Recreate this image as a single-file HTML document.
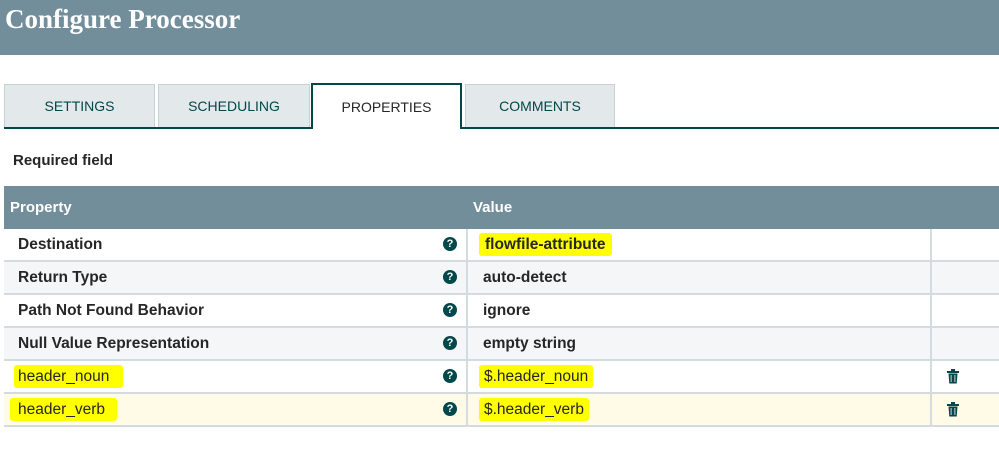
<!DOCTYPE html>
<html><head><meta charset="utf-8"><style>
*{margin:0;padding:0;box-sizing:border-box}
body{width:999px;height:455px;background:#fff;position:relative;overflow:hidden;font-family:"Liberation Sans",sans-serif;}
.hdr{position:absolute;left:0;top:0;width:999px;height:55px;background:#728e9b;}
.hdr h1{position:absolute;left:5px;top:4px;font-family:"Liberation Serif",serif;font-weight:bold;font-size:27px;color:#fff;}
.tab{position:absolute;top:84px;height:44px;background:#e3e8eb;border:1px solid #c7d2d7;border-bottom:none;font-size:14px;color:#004849;text-align:center;line-height:43px;}
.tab.act{background:#fff;border:2px solid #004849;border-bottom:none;color:#262626;top:83px;height:46px;line-height:45px;}
.line{position:absolute;left:4px;top:127px;width:995px;height:2px;background:#004849;}
.req{position:absolute;left:13px;top:152px;font-size:15px;font-weight:bold;color:#262626;}
.th{position:absolute;left:4px;top:186px;width:995px;height:43px;background:#728e9b;color:#fff;font-weight:bold;font-size:15px;}
.th span{position:absolute;top:13px;}
.row{position:absolute;left:4px;width:995px;height:33px;border-bottom:2px solid #d3dbdf;font-size:15.5px;color:#262626;}
.row .n{position:absolute;left:14px;top:7px;font-weight:bold;}
.row .v{position:absolute;left:479px;top:7px;font-weight:bold;}
.row .n.nb,.row .v.nb{font-weight:normal;}
.c1{position:absolute;left:462px;top:0;width:2px;height:33px;background:#d3dbdf;}
.c2{position:absolute;left:926px;top:0;width:2px;height:33px;background:#d3dbdf;}
.q{position:absolute;left:439px;top:8px;width:14px;height:14px;border-radius:50%;background:#004849;color:#fff;font-size:11px;font-weight:bold;text-align:center;line-height:14px;}
.hl{background:#ffff00;padding:2px 4px;margin-left:-4px;border-radius:3px;}
.tr{position:absolute;left:943px;top:8px;}
</style></head><body>
<div class="hdr"><h1>Configure Processor</h1></div>
<div class="tab" style="left:4px;width:151px">SETTINGS</div>
<div class="tab" style="left:158px;width:152px">SCHEDULING</div>
<div class="tab" style="left:465px;width:150px">COMMENTS</div>
<div class="line"></div>
<div class="tab act" style="left:311px;width:151px">PROPERTIES</div>
<div class="req">Required field</div>
<div class="th"><span style="left:6px">Property</span><span style="left:469px">Value</span></div>

<div class="row" style="top:229px;background:#fff"><span class="n">Destination</span><div class="q">?</div><div class="c1"></div><span class="v"><span class="hl" style="padding:3px 6px">flowfile-attribute</span></span><div class="c2"></div></div>
<div class="row" style="top:262px;background:#f4f6f7"><span class="n">Return Type</span><div class="q">?</div><div class="c1"></div><span class="v">auto-detect</span><div class="c2"></div></div>
<div class="row" style="top:295px;background:#fff"><span class="n">Path Not Found Behavior</span><div class="q">?</div><div class="c1"></div><span class="v">ignore</span><div class="c2"></div></div>
<div class="row" style="top:328px;background:#f4f6f7"><span class="n">Null Value Representation</span><div class="q">?</div><div class="c1"></div><span class="v">empty string</span><div class="c2"></div></div>
<div class="row" style="top:361px;background:#fff"><span class="n nb"><span class="hl" style="padding:3px 14px 3px 4px">header_noun</span></span><div class="q">?</div><div class="c1"></div><span class="v nb"><span class="hl" style="padding:3px 5px">$.header_noun</span></span><div class="c2"></div>
<svg class="tr" width="12" height="15" viewBox="0 0 12 15"><rect x="0" y="2" width="12" height="2" fill="#004849"/><rect x="4" y="0" width="4" height="2" fill="#004849"/><path d="M1.5 4.5h9l-0.8 10h-7.4z" fill="#004849"/><rect x="3.5" y="6" width="1.3" height="7" fill="#9fb3b8"/><rect x="7.2" y="6" width="1.3" height="7" fill="#9fb3b8"/></svg></div>
<div class="row" style="top:394px;background:#fffbe6"><span class="n nb"><span class="hl" style="padding:3px 12px 3px 8px;margin-left:-8px">header_verb</span></span><div class="q">?</div><div class="c1"></div><span class="v nb"><span class="hl" style="padding:3px 5px">$.header_verb</span></span><div class="c2"></div>
<svg class="tr" width="12" height="15" viewBox="0 0 12 15"><rect x="0" y="2" width="12" height="2" fill="#004849"/><rect x="4" y="0" width="4" height="2" fill="#004849"/><path d="M1.5 4.5h9l-0.8 10h-7.4z" fill="#004849"/><rect x="3.5" y="6" width="1.3" height="7" fill="#9fb3b8"/><rect x="7.2" y="6" width="1.3" height="7" fill="#9fb3b8"/></svg></div>
</body></html>
